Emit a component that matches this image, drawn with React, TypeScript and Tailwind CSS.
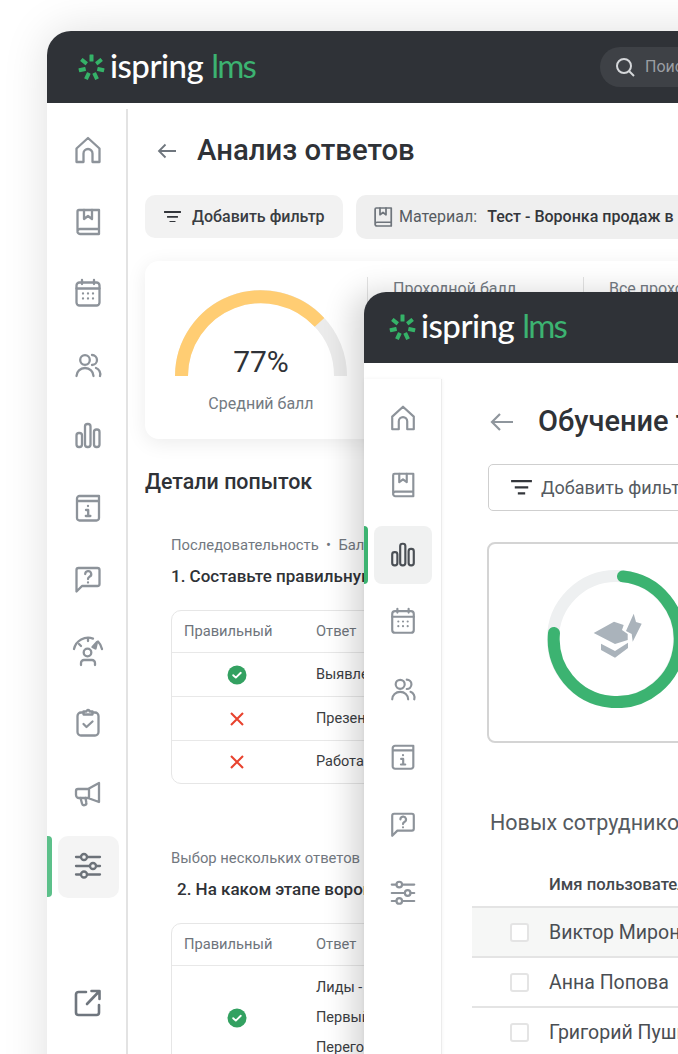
import React from 'react';

const Svg = ({ size = 32, color = '#8d939a', sw = 2.3, children }: { size?: number; color?: string; sw?: number; children: React.ReactNode }) => (
  <svg width={size} height={size} viewBox="0 0 32 32" fill="none" stroke={color} strokeWidth={sw} strokeLinecap="round" strokeLinejoin="round">
    {children}
  </svg>
);

type IconProps = { size?: number; color?: string };

const HomeIcon = (p: IconProps) => (
  <Svg {...p}><path d="M4.5 28V14.5L16 4l11.5 10.5V28h-7v-8.5a4.5 4.5 0 0 0-9 0V28z" /></Svg>
);
const BookIcon = (p: IconProps) => (
  <Svg {...p}>
    <path d="M5.5 25V5.5A1.5 1.5 0 0 1 7 4h20v24H8a2.5 2.5 0 0 1-2.500-3 2.5 2.5 0 0 1 2.500-2h19" />
    <path d="M12 4v9l4-3 4 3V4" />
  </Svg>
);
const CalendarIcon = (p: IconProps) => (
  <Svg {...p}>
    <rect x="4.5" y="5.5" width="23" height="23" rx="3" />
    <path d="M4.5 11.5h23M10 3v4M22 3v4" />
    <path d="M11 16.5h.01M16 16.5h.01M21 16.5h.01M11 21.5h.01M16 21.5h.01M21 21.5h.01" />
  </Svg>
);
const UsersIcon = (p: IconProps) => (
  <Svg {...p}>
    <circle cx="13" cy="11" r="4.800" />
    <path d="M4.5 27a8.500 8 0 0 1 17 0M20 6a5 5 0 0 1 0 10M24 19a6.500 6.500 0 0 1 4 8" />
  </Svg>
);
const BarsIcon = (p: IconProps) => (
  <Svg {...p}>
    <rect x="4.5" y="13" width="5.5" height="14" rx="2.5" />
    <rect x="13" y="4" width="5.5" height="23" rx="2.5" />
    <rect x="22" y="9.5" width="5.5" height="17.5" rx="2.5" />
  </Svg>
);
const InfoBookIcon = (p: IconProps) => (
  <Svg {...p}>
    <path d="M5 9V6.500A2.500 2.500 0 0 1 7.500 4H27v5M5 9h22v17a2.500 2.500 0 0 1-2.500 2.500h-17A2.500 2.500 0 0 1 5 26z" />
    <path d="M16 14h.01M14 18h2.200v6M13.800 24h4.600" />
  </Svg>
);
const QuestionIcon = (p: IconProps) => (
  <Svg {...p}>
    <path d="M4.500 27.500V6a2 2 0 0 1 2-2h19a2 2 0 0 1 2 2v14a2 2 0 0 1-2 2H10z" />
    <path d="M13.200 10a3 3 0 1 1 4.300 2.800c-1 .6-1.500 1-1.500 2.200M16 18.500h.01" />
  </Svg>
);
const GaugeIcon = (p: IconProps) => (
  <Svg {...p}>
    <path d="M2 14A14.500 14.500 0 0 1 21 3.600M26 6.500A14.500 14.500 0 0 1 30 14" />
    <path d="M7 9l2 2M16 4v2" />
    <path d="M20.500 12l4.500-5-1.500 6.500z" fill="#8d939a" />
    <circle cx="15.500" cy="17.500" r="3.800" />
    <path d="M9 30v-2a3 3 0 0 1 3-3h8a3 3 0 0 1 3 3v2" />
  </Svg>
);
const ClipboardIcon = (p: IconProps) => (
  <Svg {...p}>
    <path d="M11.500 5.500H9A3.500 3.500 0 0 0 5.500 9v16A3.500 3.500 0 0 0 9 28.500h14a3.500 3.500 0 0 0 3.500-3.500V9A3.500 3.500 0 0 0 23 5.500h-2.500" />
    <path d="M11.500 7.500v-3h3a1.500 1.500 0 0 1 3 0h3v3z" />
    <path d="M11.500 17l3 3 6-5.500" />
  </Svg>
);
const MegaphoneIcon = (p: IconProps) => (
  <Svg {...p}>
    <path d="M4 13a2 2 0 0 1 2-2h10l11-6v19l-11-4H7a3 3 0 0 1-3-3zM17 11v9" />
    <path d="M8.500 20l1.500 5.500a2.200 2.200 0 0 0 4.300-1L13.500 20" />
  </Svg>
);
const SlidersIcon = ({ size, color = '#6c7279' }: IconProps) => (
  <Svg size={size} color={color}>
    <path d="M4 7h5M15 7h13M4 16h14M24 16h4M4 24.500h5M15 24.500h13" />
    <circle cx="12" cy="7" r="3" />
    <circle cx="21" cy="16" r="3" />
    <circle cx="12" cy="24.500" r="3" />
  </Svg>
);
const ExternalIcon = () => (
  <Svg color="#6f767e" sw={2.6}>
    <path d="M14 5H6.500A2.500 2.500 0 0 0 4 7.500v18A2.500 2.500 0 0 0 6.500 28h18a2.500 2.500 0 0 0 2.500-2.500V18" />
    <path d="M15 17L27 4.500M19.500 4H27.500v8" />
  </Svg>
);

const FilterIcon = ({ w = 17, color = '#33363b' }: { w?: number; color?: string }) => (
  <svg width={w} height={w * 0.7} viewBox="0 0 17 12" fill="none" stroke={color} strokeWidth="1.800">
    <path d="M0 1h17M3 6h11M5.500 11h6" />
  </svg>
);

const CheckCircle = () => (
  <svg width="20" height="20" viewBox="0 0 20 20">
    <circle cx="10" cy="10" r="9.500" fill="#33a161" />
    <path d="M6.200 10.200l2.600 2.400 5-4.800" fill="none" stroke="#fff" strokeWidth="1.900" strokeLinecap="round" strokeLinejoin="round" />
  </svg>
);

const CrossIcon = () => (
  <svg width="16" height="16" viewBox="0 0 16 16" fill="none" stroke="#e8432e" strokeWidth="2.100">
    <path d="M2 2l12 12M14 2L2 14" />
  </svg>
);

const spokes = [0, 51.43, 102.86, 154.29, 205.71, 257.14, 308.57];

const Logo = () => (
  <div className="flex items-center">
    <svg width="27" height="27" viewBox="0 0 27 27" fill="#35b368">
      {spokes.map((a) => (
        <rect key={a} x="11.500" y="0.500" width="4" height="7" rx="0.500" transform={`rotate(${a} 13.500 13.500)`} />
      ))}
    </svg>
    <span className="ml-[5px] pb-[4px] font-[family-name:Lato,sans-serif] text-[33px] leading-none font-medium tracking-[-0.5px] text-white">ispring</span>
    <span className="ml-[8px] pb-[4px] font-[family-name:Lato,sans-serif] text-[33px] leading-none font-normal tracking-[-1.800px] text-[#3cb371]">lms</span>
  </div>
);

const Gauge = () => (
  <svg width="172" height="87" viewBox="0 0 172 87" fill="none" strokeWidth="13">
    <path d="M6.500 86a79.500 79.500 0 0 1 159 0" stroke="#ebebeb" />
    <path d="M6.500 86a79.500 79.500 0 0 1 138-53.600" stroke="#ffcd73" />
  </svg>
);

const Ring = () => (
  <svg width="138" height="138" viewBox="0 0 138 138" fill="none" strokeWidth="12">
    <circle cx="69" cy="69" r="63" stroke="#eef0f1" />
    <path d="M76 6.400A63 63 0 1 1 7 63" stroke="#3cb371" strokeLinecap="round" />
    <g fill="#aab3bb" stroke="none">
      <path d="M46.700 63L67 51.700 76.700 55 75 60l5.700 4v6L68 74z" />
      <path d="M54 73.700L68 81l13-8.300V78L68 87.700 54 80z" />
      <path d="M86.700 43.700L79 61l5.700 3 1 7.700 9-18-5.700-1.700z" />
    </g>
  </svg>
);

const tableHead = 'flex h-[42px] items-center border-b border-[#e8e8e8] text-[14.700px] text-[#6e747b]';
const answerRow = 'flex h-[44px] items-center border-b border-[#e8e8e8] text-[14.500px] text-[#3a3d42]';

const AnswerRow = ({ ok, text }: { ok: boolean; text: string }) => (
  <div className={answerRow}>
    <div className="flex w-[130px] justify-center">{ok ? <CheckCircle /> : <CrossIcon />}</div>
    <span className="ml-[14px]">{text}</span>
  </div>
);

const TableHead = () => (
  <div className={tableHead}>
    <span className="ml-[12px] w-[120px]">Правильный</span>
    <span className="ml-[12px]">Ответ</span>
  </div>
);

const BackWindow = () => {
  const top = [HomeIcon, BookIcon, CalendarIcon, UsersIcon, BarsIcon, InfoBookIcon, QuestionIcon, GaugeIcon, ClipboardIcon, MegaphoneIcon];

  return (
    <div className="absolute top-[31px] left-[47px] h-[1100px] w-[760px] rounded-tl-[24px] bg-white shadow-[0_0_45px_rgba(0,0,0,0.13)]">
      {/* Header */}
      <header className="flex h-[72px] items-center justify-between rounded-tl-[24px] bg-[#2f3237] pl-[31px]">
        <Logo />
        <div className="mr-[22px] flex h-[40px] w-[185px] items-center rounded-full bg-[#3e4146] pl-[15px]">
          <svg width="20" height="20" viewBox="0 0 20 20" fill="none" stroke="#d5d7da" strokeWidth="2">
            <circle cx="9" cy="9" r="7" />
            <path d="M14 14l5 5" />
          </svg>
          <span className="ml-[10px] text-[16px] text-[#9a9ea3]">Поиск</span>
        </div>
      </header>

      <div className="flex">
        {/* Sidebar */}
        <aside className="mt-[6px] flex h-[1000px] w-[81px] shrink-0 flex-col items-center gap-[9.600px] border-r-2 border-[#e3e3e3] pt-[11.500px] pl-[3px]">
          {top.map((Icon, i) => (
            <div key={i} className="flex h-[62px] w-[61px] items-center justify-center pb-[3px]">
              <Icon />
            </div>
          ))}
          <div className="relative flex h-[62px] w-[61px] items-center justify-center rounded-[10px] bg-[#f4f4f4] pb-[2px]">
            <SlidersIcon />
            <div className="absolute top-0 left-[-11px] h-[61px] w-[5px] rounded-r-[4px] bg-[#5cc08a]" />
          </div>
          <div className="mt-[64px] flex h-[62px] w-[61px] items-center justify-center">
            <ExternalIcon />
          </div>
        </aside>

        {/* Content */}
        <main className="pl-[17px]">
          <div className="mt-[29px] flex h-[38px] items-center">
            <svg className="ml-[12px]" width="20" height="16" viewBox="0 0 20 16" fill="none" stroke="#6f767e" strokeWidth="1.800">
              <path d="M19 8H2M8.500 1.500L2 8l6.500 6.500" />
            </svg>
            <h1 className="ml-[20px] text-[29.300px] font-medium text-[#2f3237]">Анализ ответов</h1>
          </div>

          <div className="mt-[25px] flex gap-[13px]">
            <div className="flex h-[43px] w-[198px] items-center rounded-[10px] bg-[#f2f2f2] pl-[19px] text-[16px] font-medium text-[#3a3d42]">
              <FilterIcon />
              <span className="ml-[11px] whitespace-nowrap">Добавить фильтр</span>
            </div>
            <div className="flex h-[44px] w-[400px] items-center rounded-[10px] bg-[#efefef] pl-[15px] text-[16px]">
              <BookIcon size={24} color="#6f757c" />
              <span className="ml-[4px] text-[#565b61]">Материал:</span>
              <span className="ml-[10px] whitespace-nowrap font-medium text-[#33363b]">Тест - Воронка продаж в</span>
            </div>
          </div>

          {/* Result card */}
          <div className="mt-[22px] flex h-[178px] w-[560px] rounded-[14px] bg-white shadow-[0_4px_20px_rgba(0,0,0,0.08)]">
            <div className="relative w-[222px] shrink-0 pt-[29px] pl-[30px]">
              <Gauge />
              <div className="absolute top-[78px] left-0 w-[232px] text-center text-[30px] text-[#2f3237]">77%</div>
              <div className="absolute top-[131px] left-0 w-[232px] text-center text-[16px] text-[#737a82]">Средний балл</div>
            </div>
            <div className="mt-[16px] h-[100px] w-[216px] shrink-0 border-l border-[#e3e3e3] pl-[25px] text-[16px] whitespace-nowrap text-[#737a82]">Проходной балл</div>
            <div className="mt-[16px] h-[100px] shrink-0 border-l border-[#e3e3e3] pl-[25px] text-[16px] whitespace-nowrap text-[#737a82]">Все прохождения</div>
          </div>

          <h2 className="mt-[29px] text-[21.400px] leading-[28px] font-medium text-[#2f3237]">Детали попыток</h2>

          {/* Question 1 */}
          <div className="mt-[39px] ml-[26px] w-[520px]">
            <p className="text-[14.800px] leading-[20px] text-[#72787f]">Последовательность&nbsp; •&nbsp; Балл: 1</p>
            <p className="mt-[11px] text-[17px] leading-[20px] font-medium text-[#2f3237]">1. Составьте правильную цепочку</p>
            <div className="mt-[24px] overflow-hidden rounded-[10px] border border-[#e6e6e6]">
              <TableHead />
              <AnswerRow ok text="Выявление потребностей" />
              <AnswerRow ok={false} text="Презентация" />
              <div className="flex h-[42px] items-center text-[14.500px] text-[#3a3d42]">
                <div className="flex w-[130px] justify-center"><CrossIcon /></div>
                <span className="ml-[14px]">Работа с возражениями</span>
              </div>
            </div>
          </div>

          {/* Question 2 */}
          <div className="mt-[64px] ml-[26px] w-[520px]">
            <p className="text-[14.800px] leading-[20px] text-[#72787f]">Выбор нескольких ответов</p>
            <p className="mt-[11px] ml-[6px] text-[17px] leading-[20px] font-medium text-[#2f3237]">2. На каком этапе воронки</p>
            <div className="mt-[24px] overflow-hidden rounded-[10px] border border-[#e6e6e6]">
              <TableHead />
              <div className="flex h-[110px] items-start text-[14.500px] leading-[20px] text-[#3a3d42]">
                <div className="flex h-[104px] w-[130px] items-center justify-center"><CheckCircle /></div>
                <div className="ml-[14px] flex flex-col gap-[10px] pt-[12px]">
                  <span>Лиды - Сделка</span>
                  <span>Первый контакт</span>
                  <span>Переговоры</span>
                </div>
              </div>
            </div>
          </div>
        </main>
      </div>
    </div>
  );
};

const FrontWindow = () => {
  const rest = [CalendarIcon, UsersIcon, InfoBookIcon, QuestionIcon];

  return (
    <div className="absolute top-[292px] left-[364px] h-[800px] w-[420px] rounded-tl-[22px] bg-white shadow-[-12px_0_30px_rgba(0,0,0,0.16)]">
      <header className="flex h-[71px] items-center rounded-tl-[22px] bg-[#2f3237] pl-[25px]">
        <Logo />
      </header>

      <div className="flex">
        {/* Sidebar */}
        <aside className="mt-[16px] flex h-[720px] w-[78px] shrink-0 flex-col items-center border-r border-[#ececec] shadow-[0_0_4px_rgba(0,0,0,0.05)]">
          <div className="mt-[24px] flex h-[30px] items-center"><HomeIcon size={30} /></div>
          <div className="mt-[37px] flex h-[30px] items-center"><BookIcon size={30} /></div>
          <div className="relative mt-[26px] flex h-[58px] w-[58px] items-center justify-center rounded-[8px] bg-[#f0f1f1]">
            <BarsIcon size={30} color="#4a4f55" />
            <div className="absolute top-0 left-[-10px] h-[58px] w-[4px] rounded-r-[4px] bg-[#3cb371]" />
          </div>
          <div className="mt-[22px] flex flex-col items-center gap-[38px]">
            {rest.map((Icon, i) => (
              <div key={i} className="flex h-[30px] items-center"><Icon size={30} /></div>
            ))}
            <div className="flex h-[30px] items-center"><SlidersIcon size={30} color="#8d939a" /></div>
          </div>
        </aside>

        {/* Content */}
        <main className="flex-1">
          <div className="mt-[40px] flex h-[38px] items-center pl-[48px]">
            <svg width="24" height="20" viewBox="0 0 24 20" fill="none" stroke="#8f969d" strokeWidth="2.200">
              <path d="M23 10H2M10 2l-8 8 8 8" />
            </svg>
            <h1 className="ml-[24px] whitespace-nowrap text-[29px] font-medium text-[#2f3237]">Обучение технические</h1>
          </div>

          <div className="mt-[23px] ml-[46px] flex h-[47px] w-[300px] items-center rounded-[5px] border border-[#cfcfcf] pl-[22px]">
            <FilterIcon w={21} />
            <span className="ml-[9px] whitespace-nowrap text-[18px] text-[#555a60]">Добавить фильтр</span>
          </div>

          <div className="mt-[31px] ml-[45px] flex h-[201px] w-[300px] items-center rounded-[8px] border-2 border-[#d4d4d4] pb-[8px] pl-[58px]">
            <Ring />
          </div>

          <p className="mt-[64px] ml-[48px] whitespace-nowrap text-[21.500px] text-[#555a60]">Новых сотрудников</p>

          <div className="mt-[33px] ml-[107px] whitespace-nowrap text-[16.700px] font-medium text-[#44484d]">Имя пользователя</div>

          <div className="mt-[9px] ml-[30px]">
            {['Виктор Миронов', 'Анна Попова', 'Григорий Пушкин'].map((name, i) => (
              <div key={name} className={`flex h-[50px] items-center border-t-2 border-[#e4e4e4] pl-[38px] ${i === 0 ? 'bg-[#f6f7f6]' : ''}`}>
                <div className="h-[19px] w-[19px] rounded-[3px] border-2 border-[#e4e4e4] bg-white" />
                <span className="ml-[20px] whitespace-nowrap text-[19.500px] text-[#4a4e53]">{name}</span>
              </div>
            ))}
          </div>
        </main>
      </div>
    </div>
  );
};

export default function App() {
  return (
    <div className="relative h-[1054px] w-[678px] overflow-hidden bg-white font-[family-name:Roboto,sans-serif]">
      <BackWindow />
      <FrontWindow />
    </div>
  );
}
